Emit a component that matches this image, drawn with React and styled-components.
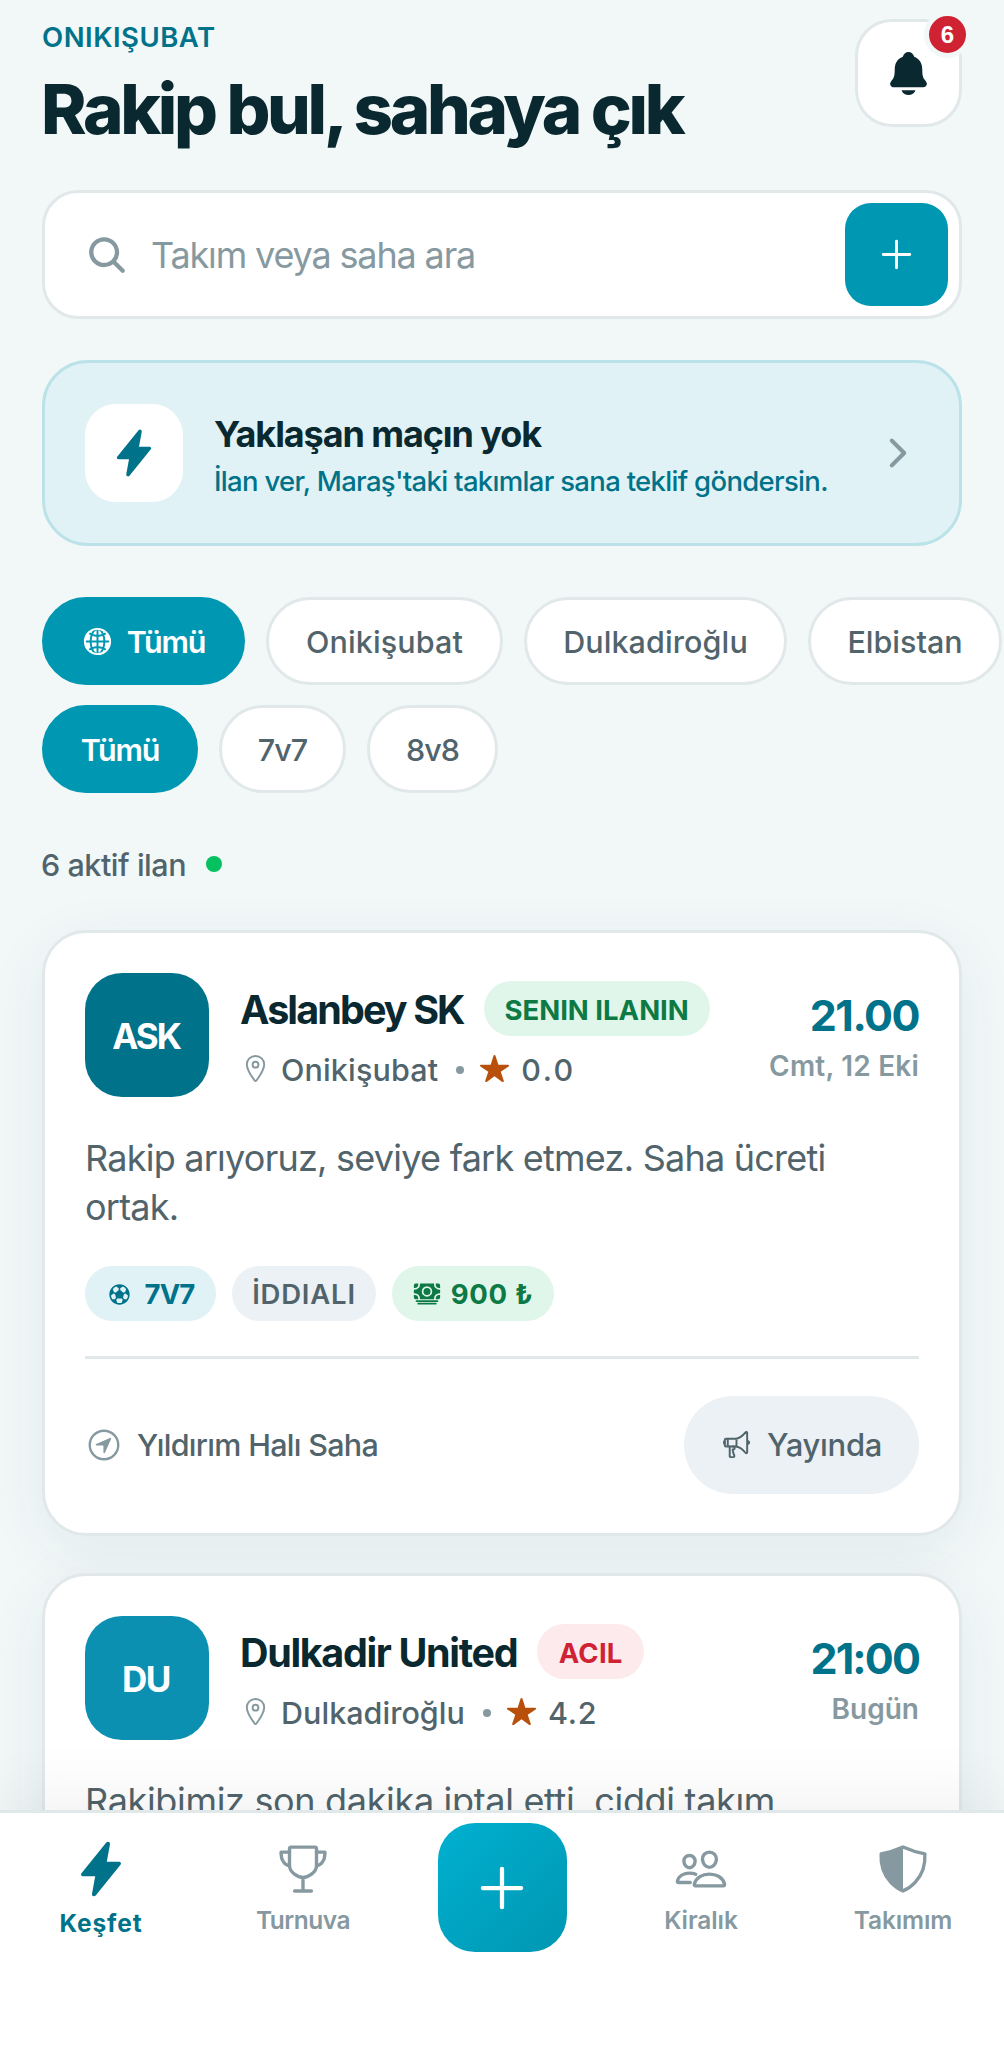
import React from "react";
import styled, { createGlobalStyle } from "styled-components";
import {
  IoAdd,
  IoCash,
  IoChevronForward,
  IoFlash,
  IoFootball,
  IoGlobe,
  IoLocationOutline,
  IoMegaphoneOutline,
  IoNavigateCircleOutline,
  IoNotifications,
  IoPeopleOutline,
  IoSearch,
  IoShieldHalf,
  IoStar,
  IoTrophyOutline,
} from "react-icons/io5";

const c = {
  bg: "#f2f8f8",
  ink: "#0a2830",
  body: "#51646b",
  muted: "#8799a0",
  line: "#e1e8e9",
  teal: "#0097b2",
  deep: "#00728a",
  green: "#0d7a45",
  greenSoft: "#e0f6ea",
  red: "#cf2333",
};

const GlobalStyle = createGlobalStyle`
  * { box-sizing: border-box; }
  body { margin: 0; background: ${c.bg}; font-family: Inter, "Open Sans", sans-serif; }
  svg { display: block; flex: none; }
`;

const Screen = styled.div`
  width: 1004px;
  height: 2048px;
  display: flex;
  flex-direction: column;
  overflow: hidden;
  background: ${c.bg};
`;

const Content = styled.main`
  flex: 1;
  min-height: 0;
  overflow: hidden;
  padding: 19px 42px 0;
`;

const Text = styled.span`
  display: block;
  white-space: nowrap;
  letter-spacing: ${(p) => p.$ls || 0}px;
`;

const Header = styled.header`
  display: flex;
  justify-content: space-between;
  align-items: flex-start;
`;

const Eyebrow = styled(Text)`
  font-size: 27.5px;
  font-weight: 600;
  line-height: 36px;
  color: ${c.deep};
`;

const Title = styled.h1`
  margin: 11px 0 0 -1px;
  font-size: 69px;
  font-weight: 800;
  line-height: 86px;
  letter-spacing: -3.35px;
  color: ${c.ink};
  white-space: nowrap;
`;

const BellButton = styled.button`
  position: relative;
  width: 107px;
  height: 108px;
  padding: 0;
  display: flex;
  align-items: center;
  justify-content: center;
  border: 3px solid ${c.line};
  border-radius: 37px;
  background: #fff;
  color: ${c.ink};
`;

const Badge = styled.span`
  position: absolute;
  top: -11px;
  right: -12px;
  width: 47px;
  height: 47px;
  border-radius: 50%;
  border: 5px solid ${c.bg};
  background: ${c.red};
  color: #fff;
  font-family: inherit;
  font-size: 24px;
  font-weight: 800;
  line-height: 37px;
  text-align: center;
`;

const SearchBar = styled.div`
  height: 129px;
  margin-top: 38px;
  padding: 0 11px 0 40px;
  display: flex;
  align-items: center;
  border: 3px solid ${c.line};
  border-radius: 36px;
  background: #fff;
  color: ${c.muted};
`;

const Placeholder = styled(Text)`
  flex: 1;
  margin-left: 22px;
  font-size: 36px;
  line-height: 50px;
`;

const AddButton = styled.button`
  width: 103px;
  height: 103px;
  padding: 0;
  display: flex;
  align-items: center;
  justify-content: center;
  border: 0;
  border-radius: 26px;
  background: ${c.teal};
  color: #fff;
`;

const Banner = styled.section`
  height: 186px;
  margin-top: 41px;
  padding: 0 39px 0 40px;
  display: flex;
  align-items: center;
  border: 3px solid #bbe2e8;
  border-radius: 46px;
  background: #e0f2f5;
  color: ${c.muted};
`;

const BannerIcon = styled.div`
  width: 98px;
  height: 98px;
  display: flex;
  align-items: center;
  justify-content: center;
  border-radius: 31px;
  background: #fff;
  color: ${c.deep};
`;

const BannerCopy = styled.div`
  flex: 1;
  margin-left: 31px;
  padding-top: 7px;
`;

const BannerTitle = styled(Text)`
  font-size: 36px;
  font-weight: 700;
  line-height: 48px;
  color: ${c.ink};
`;

const BannerNote = styled(Text)`
  font-size: 27.5px;
  font-weight: 500;
  line-height: 46px;
  color: ${c.deep};
`;

const Chips = styled.div`
  display: flex;
  gap: 21px;
  margin-top: ${(p) => p.$top}px;
`;

const Chip = styled.button`
  flex: none;
  width: ${(p) => p.$w}px;
  height: 88px;
  padding: 0;
  display: flex;
  align-items: center;
  justify-content: center;
  gap: 14px;
  border: 3px solid ${(p) => (p.$active ? c.teal : c.line)};
  border-radius: 44px;
  background: ${(p) => (p.$active ? c.teal : "#fff")};
  color: ${(p) => (p.$active ? "#fff" : c.body)};
  font-family: inherit;
  font-size: 30.5px;
  font-weight: ${(p) => (p.$active ? 600 : 500)};
`;

const Status = styled.div`
  display: flex;
  align-items: center;
  gap: 20px;
  margin: 52px 0 0 -1px;
  font-size: 30.5px;
  font-weight: 500;
  line-height: 40px;
  color: ${c.body};
`;

const LiveDot = styled.span`
  width: 16px;
  height: 16px;
  margin-top: -2px;
  border-radius: 50%;
  background: #05c160;
`;

const Card = styled.article`
  height: 606px;
  margin-top: ${(p) => p.$top}px;
  padding: 40px;
  border: 3px solid ${c.line};
  border-radius: 44px;
  background: #fff;
  box-shadow: 0 16px 62px rgba(25, 50, 90, 0.07);
`;

const CardHead = styled.div`
  display: flex;
  align-items: flex-start;
`;

const Avatar = styled.div`
  width: 124px;
  height: 124px;
  display: flex;
  align-items: center;
  justify-content: center;
  border-radius: 37px;
  background: ${(p) => p.$color};
  color: #fff;
  font-size: 35px;
  font-weight: 700;
  padding: 2px 2px 0 0;
`;

const Info = styled.div`
  flex: 1;
  margin: 8px 0 0 31px;
`;

const NameRow = styled.div`
  height: 55px;
  display: flex;
  align-items: center;
  gap: 20px;
`;

const Name = styled(Text)`
  font-size: 39.5px;
  font-weight: 700;
  line-height: 55px;
  padding-top: 3px;
  color: ${c.ink};
`;

const tones = {
  teal: ["#e0f2f5", c.deep],
  gray: ["#ecf1f5", c.body],
  green: [c.greenSoft, c.green],
  red: ["#fdeaec", c.red],
};

const Pill = styled.span`
  width: ${(p) => p.$w}px;
  height: 55px;
  display: flex;
  align-items: center;
  justify-content: center;
  gap: ${(p) => p.$gap || 0}px;
  padding-top: 2px;
  border-radius: 28px;
  background: ${(p) => tones[p.$tone][0]};
  color: ${(p) => tones[p.$tone][1]};
  font-size: 27.5px;
  font-weight: ${(p) => p.$weight || 600};
`;

const MetaRow = styled.div`
  display: flex;
  align-items: center;
  margin-top: 14px;
  font-size: 30.5px;
  font-weight: 500;
  line-height: 40px;
  color: ${c.body};
`;

const Pin = styled(IoLocationOutline)`
  color: ${c.muted};
  margin: -3px 10px 0 0;
`;

const Bullet = styled.span`
  width: 8px;
  height: 8px;
  margin: 0 15px 0 18px;
  border-radius: 50%;
  background: ${c.muted};
`;

const Star = styled(IoStar)`
  color: #b8500b;
  margin: -3px 11px 0 0;
`;

const When = styled.div`
  display: flex;
  flex-direction: column;
  align-items: flex-end;
  margin-top: 17px;
`;

const Time = styled(Text)`
  font-size: 43px;
  font-weight: 700;
  line-height: 50px;
  color: ${c.deep};
`;

const Day = styled(Text)`
  margin-top: 6px;
  font-size: 28px;
  font-weight: 600;
  line-height: 40px;
  color: ${c.muted};
`;

const Description = styled.p`
  margin: 36.5px 0 0;
  font-size: 36px;
  line-height: 49px;
  letter-spacing: ${(p) => p.$ls}px;
  color: ${c.body};
`;

const Tags = styled.div`
  display: flex;
  gap: 16px;
  margin-top: 34px;
`;

const CardFoot = styled.div`
  display: flex;
  align-items: center;
  justify-content: space-between;
  margin-top: 35px;
  padding-top: 37px;
  border-top: 3px solid ${c.line};
`;

const Venue = styled.div`
  display: flex;
  align-items: center;
  gap: 14px;
  font-size: 30.5px;
  font-weight: 500;
  color: ${c.body};

  svg {
    color: ${c.muted};
  }
`;

const LiveButton = styled.button`
  width: 235px;
  height: 98px;
  padding: 0;
  display: flex;
  align-items: center;
  justify-content: center;
  gap: 15px;
  border: 0;
  border-radius: 49px;
  background: #ecf1f5;
  color: ${c.body};
  font-family: inherit;
  font-size: 31px;
  font-weight: 500;
`;

const TabBar = styled.nav`
  position: relative;
  height: 238px;
  flex: none;
  display: grid;
  grid-template-columns: 202px 202px 1fr 202px 202px;
  align-items: start;
  border-top: 3px solid ${c.line};
  background: #fff;
  box-shadow: 0 -12px 64px rgba(0, 0, 0, 0.06);
`;

const Tab = styled.div`
  display: flex;
  flex-direction: column;
  align-items: center;
  padding-top: 28px;
  color: ${(p) => (p.$active ? c.deep : c.muted)};
`;

const TabIcon = styled.div`
  height: 56px;
  display: flex;
  align-items: center;
`;

const MirroredShield = styled(IoShieldHalf)`
  transform: scaleX(-1);
`;

const TabLabel = styled(Text)`
  margin-top: ${(p) => (p.$active ? 8 : 5)}px;
  font-size: 24.5px;
  font-weight: ${(p) => (p.$active ? 700 : 600)};
  line-height: 36px;
`;

const Fab = styled.button`
  width: 129px;
  height: 129px;
  margin: 10px auto 0;
  padding: 0;
  display: flex;
  align-items: center;
  justify-content: center;
  border: 0;
  border-radius: 37px;
  background: linear-gradient(135deg, #00b0d0 0%, #0097b2 100%);
  color: #fff;
`;

function TeamHead({ initials, initialsLs, color, name, nameLs, badge, place, placeLs, rating, ratingLs, time, timeLs, day, dayLs }) {
  return (
    <CardHead>
      <Avatar $color={color}>
        <Text $ls={initialsLs}>{initials}</Text>
      </Avatar>
      <Info>
        <NameRow>
          <Name $ls={nameLs}>{name}</Name>
          <Pill $w={badge.w} $tone={badge.tone} $weight={700}>
            <Text $ls={badge.ls}>{badge.label}</Text>
          </Pill>
        </NameRow>
        <MetaRow>
          <Pin size={31} />
          <Text $ls={placeLs}>{place}</Text>
          <Bullet />
          <Star size={31} />
          <Text $ls={ratingLs}>{rating}</Text>
        </MetaRow>
      </Info>
      <When>
        <Time $ls={timeLs}>{time}</Time>
        <Day $ls={dayLs}>{day}</Day>
      </When>
    </CardHead>
  );
}

export default function App() {
  return (
    <>
      <GlobalStyle />
      <Screen>
        <Content>
          <Header>
            <div>
              <Eyebrow $ls={0.5}>ONIKIŞUBAT</Eyebrow>
              <Title>Rakip bul, sahaya çık</Title>
            </div>
            <BellButton>
              <IoNotifications size={49} />
              <Badge>6</Badge>
            </BellButton>
          </Header>

          <SearchBar>
            <IoSearch size={44} />
            <Placeholder $ls={-1.15}>Takım veya saha ara</Placeholder>
            <AddButton>
              <IoAdd size={47} />
            </AddButton>
          </SearchBar>

          <Banner>
            <BannerIcon>
              <IoFlash size={50} />
            </BannerIcon>
            <BannerCopy>
              <BannerTitle $ls={-1.1}>Yaklaşan maçın yok</BannerTitle>
              <BannerNote $ls={-0.69}>İlan ver, Maraş'taki takımlar sana teklif göndersin.</BannerNote>
            </BannerCopy>
            <IoChevronForward size={44} />
          </Banner>

          <Chips $top={51}>
            <Chip $active $w={203}>
              <IoGlobe size={31} />
              <Text $ls={-1.2}>Tümü</Text>
            </Chip>
            <Chip $w={237}>
              <Text $ls={0.1}>Onikişubat</Text>
            </Chip>
            <Chip $w={263}>
              <Text $ls={0.1}>Dulkadiroğlu</Text>
            </Chip>
            <Chip $w={194}>
              <Text>Elbistan</Text>
            </Chip>
          </Chips>
          <Chips $top={20}>
            <Chip $active $w={156}>
              <Text $ls={-1.2}>Tümü</Text>
            </Chip>
            <Chip $w={127}>
              <Text $ls={-1}>7v7</Text>
            </Chip>
            <Chip $w={131}>
              <Text $ls={-1}>8v8</Text>
            </Chip>
          </Chips>

          <Status>
            <Text $ls={-0.45}>6 aktif ilan</Text>
            <LiveDot />
          </Status>

          <Card $top={45}>
            <TeamHead
              initials="ASK"
              initialsLs={-2}
              color={c.deep}
              name="Aslanbey SK"
              nameLs={-1.9}
              badge={{ label: "SENIN ILANIN", w: 226, tone: "green", ls: 0 }}
              place="Onikişubat"
              placeLs={0.15}
              rating="0.0"
              ratingLs={2.5}
              time="21.00"
              timeLs={-1.5}
              day="Cmt, 12 Eki"
              dayLs={0.2}
            />
            <Description $ls={-0.76}>Rakip arıyoruz, seviye fark etmez. Saha ücreti ortak.</Description>
            <Tags>
              <Pill $w={131} $tone="teal" $gap={13} $weight={700}>
                <IoFootball size={25} />
                <Text $ls={-0.9}>7V7</Text>
              </Pill>
              <Pill $w={144} $tone="gray">
                <Text $ls={0.8}>İDDIALI</Text>
              </Pill>
              <Pill $w={162} $tone="green" $gap={10} $weight={700}>
                <IoCash size={28} />
                <Text $ls={0.7}>900 ₺</Text>
              </Pill>
            </Tags>
            <CardFoot>
              <Venue>
                <IoNavigateCircleOutline size={38} />
                <Text $ls={-0.7}>Yıldırım Halı Saha</Text>
              </Venue>
              <LiveButton>
                <IoMegaphoneOutline size={31} />
                <Text $ls={-0.3}>Yayında</Text>
              </LiveButton>
            </CardFoot>
          </Card>

          <Card $top={37}>
            <TeamHead
              initials="DU"
              initialsLs={-1.5}
              color="#0b90b2"
              name="Dulkadir United"
              nameLs={-1.35}
              badge={{ label: "ACIL", w: 107, tone: "red", ls: 0.2 }}
              place="Dulkadiroğlu"
              placeLs={0.03}
              rating="4.2"
              ratingLs={0.8}
              time="21:00"
              timeLs={-1.9}
              day="Bugün"
              dayLs={0}
            />
            <Description $ls={-0.33}>Rakibimiz son dakika iptal etti, ciddi takım arıyoruz.</Description>
          </Card>
        </Content>

        <TabBar>
          <Tab $active>
            <TabIcon>
              <IoFlash size={58} />
            </TabIcon>
            <TabLabel $active $ls={0.9}>Keşfet</TabLabel>
          </Tab>
          <Tab>
            <TabIcon>
              <IoTrophyOutline size={54} />
            </TabIcon>
            <TabLabel $ls={-0.5}>Turnuva</TabLabel>
          </Tab>
          <Fab>
            <IoAdd size={68} />
          </Fab>
          <Tab>
            <TabIcon>
              <IoPeopleOutline size={54} />
            </TabIcon>
            <TabLabel $ls={-0.1}>Kiralık</TabLabel>
          </Tab>
          <Tab>
            <TabIcon>
              <MirroredShield size={54} />
            </TabIcon>
            <TabLabel $ls={-0.15}>Takımım</TabLabel>
          </Tab>
        </TabBar>
      </Screen>
    </>
  );
}
